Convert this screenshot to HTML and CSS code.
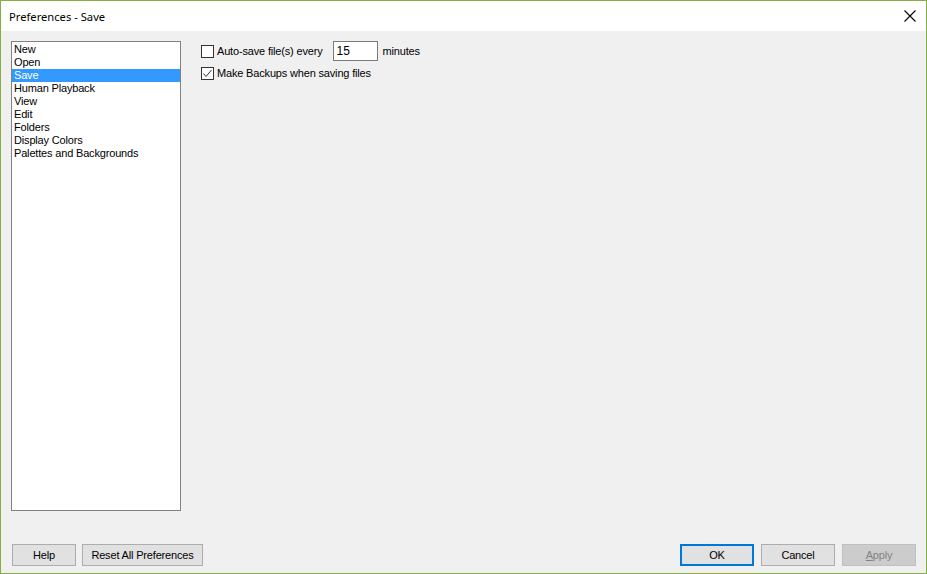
FILE: index.html
```html
<!DOCTYPE html>
<html>
<head>
<meta charset="utf-8">
<link rel="stylesheet" href="styles.css">
</head>
<body>
<div class="window">
  <div class="titlebar">
    <span class="title">Preferences - Save</span>
    <svg class="close" width="12" height="12" viewBox="0 0 12 12"><path d="M0.5 0.5 L11.5 11.5 M11.5 0.5 L0.5 11.5" stroke="#000" stroke-width="1.1" fill="none"/></svg>
  </div>
  <div class="body">
    <div class="main">
      <ul class="list">
        <li>New</li>
        <li>Open</li>
        <li class="sel">Save</li>
        <li>Human Playback</li>
        <li>View</li>
        <li>Edit</li>
        <li>Folders</li>
        <li>Display Colors</li>
        <li>Palettes and Backgrounds</li>
      </ul>
      <div class="panel">
        <div class="row row1">
          <span class="cb"></span>
          <span class="lbl">Auto-save file(s) every</span>
          <span class="textbox">15</span>
          <span class="lbl">minutes</span>
        </div>
        <div class="row row2">
          <span class="cb"><svg width="11" height="11" viewBox="0 0 11 11"><path d="M1.5 5.5 L4 8.5 L9.5 2" stroke="#333" stroke-width="1" fill="none"/></svg></span>
          <span class="lbl">Make Backups when saving files</span>
        </div>
      </div>
    </div>
    <div class="footer">
      <div class="group left">
        <button class="btn help">Help</button>
        <button class="btn reset">Reset All Preferences</button>
      </div>
      <div class="group">
        <button class="btn ok">OK</button>
        <button class="btn">Cancel</button>
        <button class="btn disabled"><u>A</u>pply</button>
      </div>
    </div>
  </div>
</div>
</body>
</html>
```
FILE: styles.css
```css
* { box-sizing: border-box; }
html, body { margin: 0; padding: 0; }
body { width: 927px; height: 574px; overflow: hidden; }
.window {
  width: 927px; height: 574px;
  border: 1px solid #84b03e;
  background: #f0f0f0;
  display: flex; flex-direction: column;
  font-family: "Liberation Sans", Arial, sans-serif;
  font-size: 11px;
  letter-spacing: -0.17px;
  color: #000;
}
.titlebar {
  height: 30px; background: #fff;
  display: flex; align-items: center; justify-content: space-between;
  padding: 0 10px 0 8px;
}
.title { font-family: "Noto Sans", sans-serif; font-size: 11.2px; letter-spacing: 0; }
.close { margin-top: -1px; }
.body { flex: 1; display: flex; flex-direction: column; padding: 10px 10px 0 10px; }
.main { display: flex; gap: 20px; height: 470px; }
.list {
  list-style: none; margin: 0; padding: 1px 0 0 0;
  width: 170px; height: 470px;
  background: #fff; border: 1px solid #828282;
}
.list li { height: 13px; line-height: 13px; padding-left: 2px; white-space: nowrap; }
.list li.sel { background: #3399ff; color: #fff; }
.panel { display: flex; flex-direction: column; padding-top: 0; }
.row { display: flex; align-items: center; }
.row1 { height: 20px; }
.row2 { margin-top: 5px; height: 14px; }
.cb {
  width: 13px; height: 13px; border: 1px solid #333; background: #fff;
  display: flex; align-items: center; justify-content: center;
  margin-right: 3px;
}
.cb svg { display: block; }
.textbox {
  width: 45px; height: 20px; border: 1px solid #7a7a7a; background: #fff;
  padding-left: 3px; line-height: 18px; font-size: 12px; letter-spacing: 0;
  margin: 0 5px 0 10px;
}
.footer {
  margin-top: 33px;
  display: flex; justify-content: space-between;
  padding-left: 1px; padding-right: 0;
}
.group { display: flex; gap: 7px; }
.group.left { gap: 6px; }
.btn {
  height: 22px; width: 74px;
  background: #e1e1e1; border: 1px solid #adadad;
  font-family: "Liberation Sans", Arial, sans-serif; font-size: 11px; color: #000;
  letter-spacing: -0.17px;
  padding: 0; margin: 0;
}
.btn.help { width: 64px; }
.btn.reset { width: 121px; }
.btn.ok { border: 2px solid #0078d7; }
.btn.disabled { background: #cccccc; border-color: #bfbfbf; color: #838383; }
.btn u { text-decoration: underline; }
```
